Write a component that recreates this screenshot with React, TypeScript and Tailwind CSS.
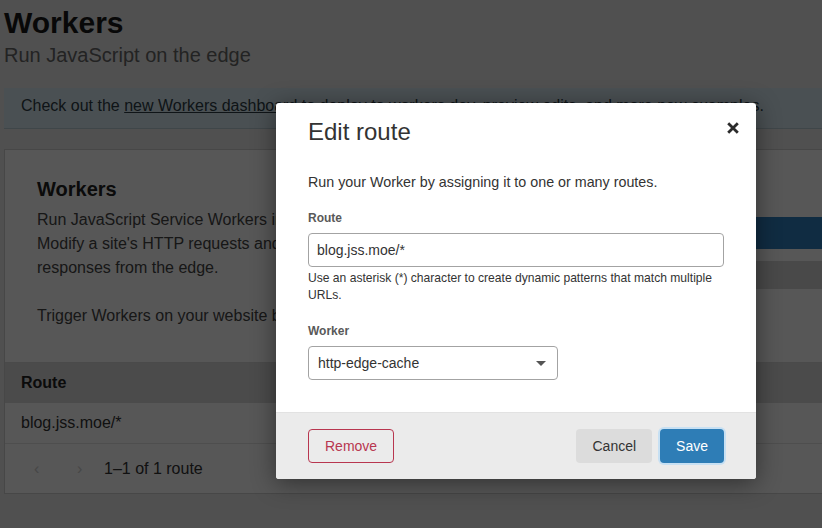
const FONT = { fontFamily: '"Liberation Sans", Arial, sans-serif' };

function Background() {
  return (
    <div className="h-full w-[900px] bg-[#ebebeb] px-[4px] text-[#222]">
      <h1 className="pt-[5px] text-[30px] font-bold leading-[36px] text-[#1a1a1a]">Workers</h1>
      <p className="mt-[2px] text-[20px] leading-[24px] text-[#666]">Run JavaScript on the edge</p>

      <div className="mt-[21px] w-[818px] border-b border-[#b9cdd6] bg-[#d9ebf3] pl-[17px] pt-[6px] pb-[10px] text-[16px] leading-[24px] text-[#2d3b45]">
        Check out the <span className="underline">new Workers dashboard</span> to deploy to workers.dev, preview edits, and more new examples.
      </div>

      <div className="mt-[20px] border border-[#cfcfcf] bg-white">
        <div className="flex gap-4 px-8 pt-[25px] pb-[34px]">
          <div className="w-[716px]">
            <h2 className="text-[20px] font-bold leading-[28px] text-[#222]">Workers</h2>
            <div className="mt-[5px] text-[16px] leading-6 text-[#444]">
              <div>Run JavaScript Service Workers in Cloudflare&apos;s global network.</div>
              <div>Modify a site&apos;s HTTP requests and</div>
              <div>responses from the edge.</div>
              <div className="mt-6">Trigger Workers on your website by adding routes below.</div>
            </div>
          </div>
          <div className="mt-[42px] flex w-[160px] flex-col gap-3">
            <div className="h-8 rounded-[4px] bg-[#2f80c2]" />
            <div className="h-7 rounded-[4px] bg-[#d6d6d6]" />
          </div>
        </div>
        <div className="flex h-[41px] items-center border-t border-[#d9d9d9] bg-[#dcdcdc] px-4 text-[16px] font-bold text-[#222]">
          Route
        </div>
        <div className="flex h-[41px] items-center border-b border-[#e3e3e3] px-4 text-[16px] text-[#333]">blog.jss.moe/*</div>
        <div className="flex h-[49px] items-center pl-[29px] text-[16px] text-[#333]">
          <span className="w-[43px] text-[#cfcfcf]">‹</span>
          <span className="w-[27px] text-[#cfcfcf]">›</span>
          <span>1–1 of 1 route</span>
        </div>
      </div>
    </div>
  );
}

function EditRouteModal() {
  return (
    <div className="w-[480px] overflow-hidden rounded-[3px] bg-white text-[#333] shadow-[0_4px_24px_rgba(0,0,0,0.45)]">
      <div className="flex items-start justify-between pl-8 pr-[17px] pt-[13px]">
        <h3 className="text-[24px] leading-[32px] text-[#333]">Edit route</h3>
        <svg className="mt-[6px]" width="12" height="12" viewBox="0 0 12 12" aria-hidden="true">
          <path d="M1.2 1.2 L10.8 10.8 M10.8 1.2 L1.2 10.8" stroke="#2b2b2b" strokeWidth="2.8" strokeLinecap="butt" />
        </svg>
      </div>

      <div className="px-8 pt-6 pb-8">
        <p className="text-[14.3px] leading-5">Run your Worker by assigning it to one or many routes.</p>

        <label className="mt-[18px] mb-[7px] block text-[12px] font-bold leading-4 text-[#595959]">Route</label>
        <div className="flex h-[34px] w-[416px] items-center rounded-[4px] border border-[#a3a3a3] px-[8px] text-[14px]">
          blog.jss.moe/*
        </div>
        <p className="mt-[3px] w-[416px] text-[12.1px] leading-[17px] text-[#333]">
          Use an asterisk (*) character to create dynamic patterns that match multiple URLs.
        </p>

        <label className="mt-[19px] mb-[7px] block text-[12px] font-bold leading-4 text-[#595959]">Worker</label>
        <div className="flex h-[34px] w-[250px] items-center justify-between rounded-[4px] border border-[#a3a3a3] pl-[9px] pr-[11px] text-[14px]">
          <span>http-edge-cache</span>
          <svg width="10" height="5" viewBox="0 0 10 5" aria-hidden="true">
            <path d="M0 0 L10 0 L5 5 Z" fill="#555" />
          </svg>
        </div>
      </div>

      <div className="flex items-center justify-between border-t border-[#e2e2e2] bg-[#ebebeb] px-8 py-4">
        <button className="h-[34px] rounded-[4px] border border-[#b8364f] px-4 text-[14px] text-[#b8364f]">Remove</button>
        <div className="flex gap-2">
          <button className="h-[34px] rounded-[4px] bg-[#dcdcdc] px-4 text-[14px] text-[#333]">Cancel</button>
          <button className="h-[34px] rounded-[4px] bg-[#2e7db6] px-4 text-[14px] text-white shadow-[0_0_0_2px_rgba(170,215,250,0.55)]">
            Save
          </button>
        </div>
      </div>
    </div>
  );
}

export default function App() {
  return (
    <div className="relative h-[528px] w-full overflow-hidden" style={FONT}>
      <Background />
      <div className="absolute inset-0 bg-black/[0.66] pl-[276px] pt-[103px]">
        <EditRouteModal />
      </div>
    </div>
  );
}
